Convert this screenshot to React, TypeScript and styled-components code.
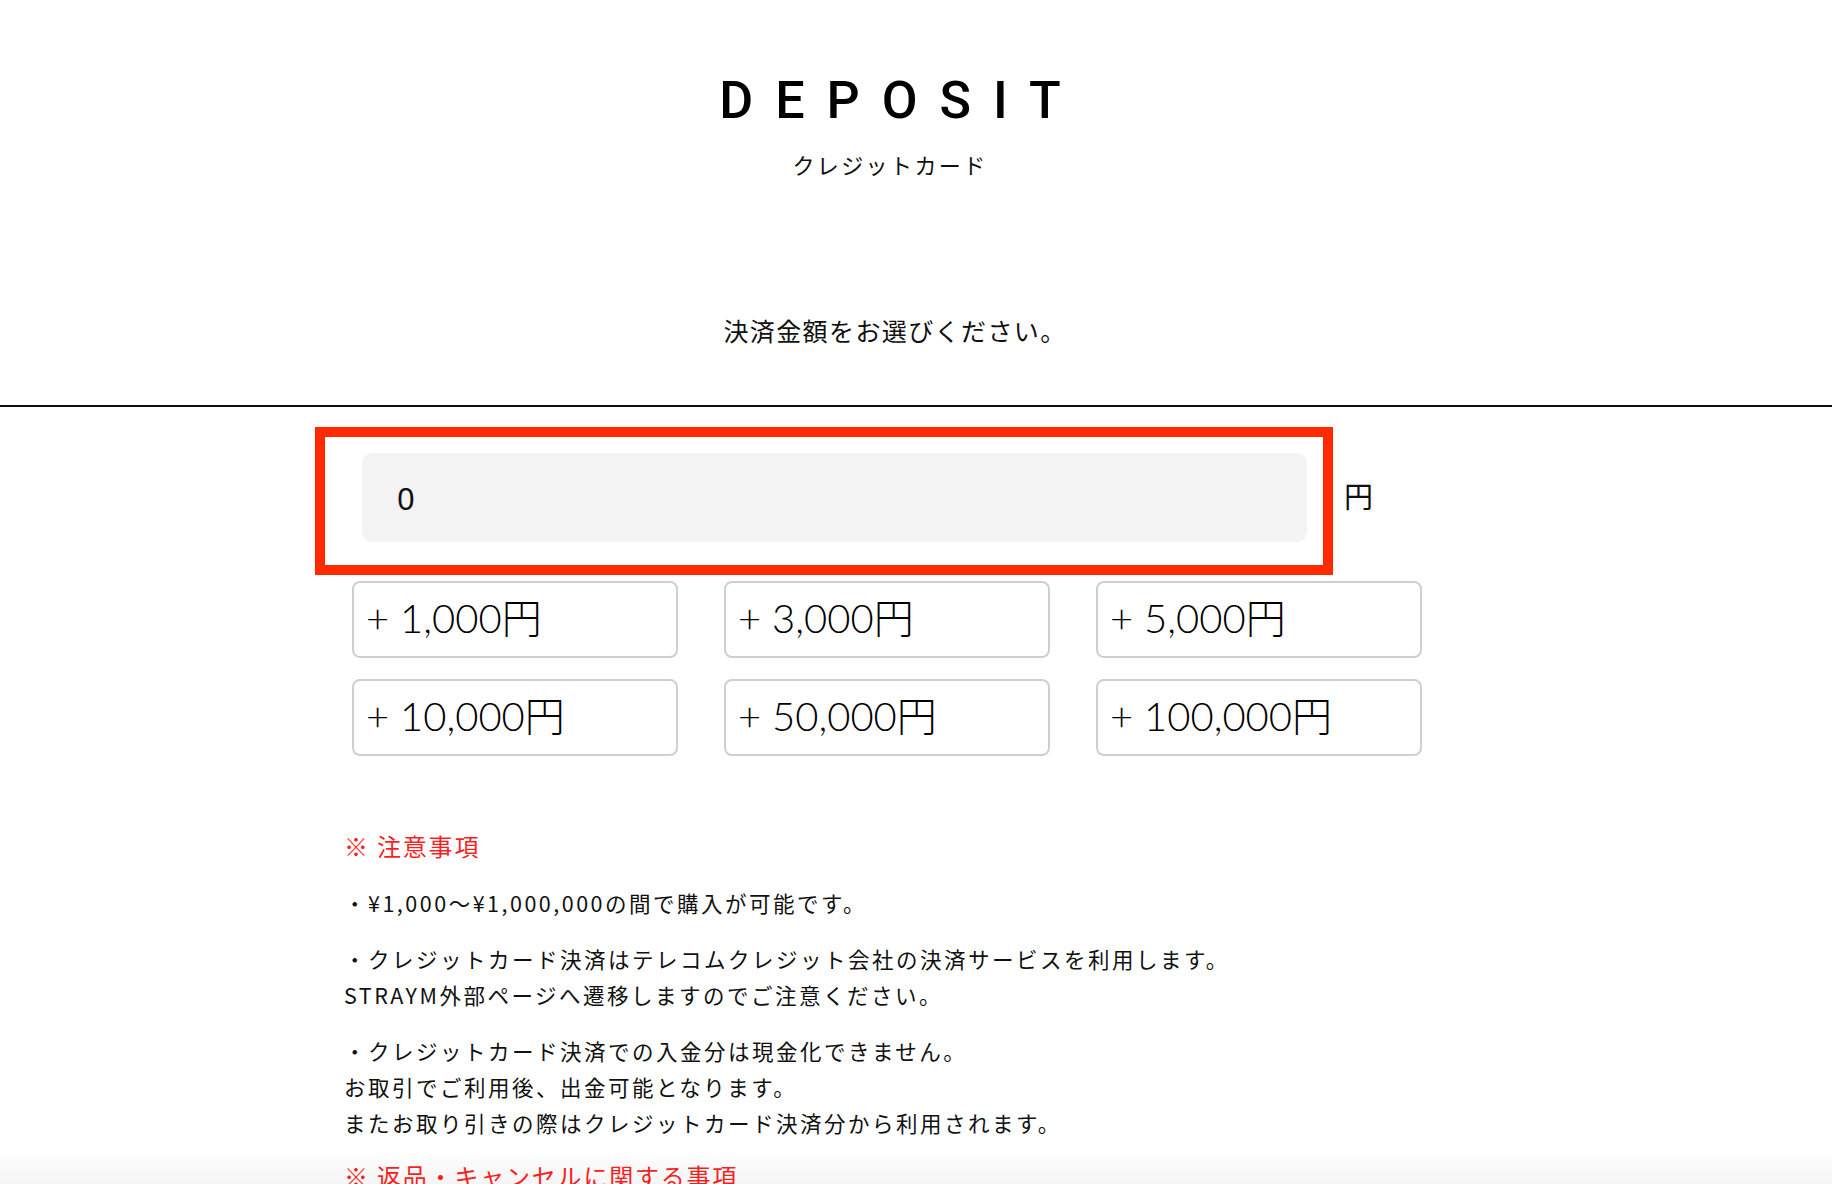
import React, { useState } from "react";
import styled, { createGlobalStyle } from "styled-components";

const presets = [1000, 3000, 5000, 10000, 50000, 100000];

const App: React.FC = () => {
  const [amount, setAmount] = useState(0);

  return (
    <>
      <GlobalStyle />
      <Header>
        <Title>DEPOSIT</Title>
        <Subtitle>クレジットカード</Subtitle>
        <Lead>決済金額をお選びください。</Lead>
      </Header>
      <Divider />
      <Content>
        <FormRow>
          <Highlight>
            <AmountInput
              type="text"
              value={amount}
              onChange={(e) => setAmount(Number(e.target.value.replace(/\D/g, "")) || 0)}
            />
          </Highlight>
          <Unit>円</Unit>
        </FormRow>
        <ButtonGrid>
          {presets.map((value) => (
            <PresetButton key={value} onClick={() => setAmount(amount + value)}>
              + {value.toLocaleString("ja-JP")}円
            </PresetButton>
          ))}
        </ButtonGrid>
        <Notes>
          <NoteTitle>※ 注意事項</NoteTitle>
          <NoteText>・¥1,000〜¥1,000,000の間で購入が可能です。</NoteText>
          <NoteText>
            ・クレジットカード決済はテレコムクレジット会社の決済サービスを利用します。
            <br />
            STRAYM外部ページへ遷移しますのでご注意ください。
          </NoteText>
          <NoteText>
            ・クレジットカード決済での入金分は現金化できません。
            <br />
            お取引でご利用後、出金可能となります。
            <br />
            またお取り引きの際はクレジットカード決済分から利用されます。
          </NoteText>
          <NoteTitle>※ 返品・キャンセルに関する事項</NoteTitle>
        </Notes>
      </Content>
      <BottomFade />
    </>
  );
};

export default App;

// Styled components
const GlobalStyle = createGlobalStyle`
  html, body {
    margin: 0;
    padding: 0;
    background: #fff;
    color: #111;
    font-family: "Noto Sans CJK JP", "Noto Sans", sans-serif;
  }
  body {
    overflow: hidden;
  }
`;

const Header = styled.header`
  display: flex;
  flex-direction: column;
  align-items: center;
  padding: 71px 52px 0 0;
`;

const Title = styled.h1`
  margin: 0 -22px 0 0;
  font-family: Roboto, "Liberation Sans", sans-serif;
  font-weight: 500;
  font-size: 52px;
  line-height: 60px;
  letter-spacing: 22px;
  color: #000;
`;

const Subtitle = styled.p`
  margin: 17px 0 0;
  font-size: 22px;
  line-height: 33px;
  letter-spacing: 2.4px;
  color: #111;
`;

const Lead = styled.p`
  margin: 131px 0 0;
  padding-left: 10px;
  font-size: 25px;
  line-height: 36px;
  letter-spacing: 1.4px;
  color: #111;
`;

const Divider = styled.hr`
  margin: 57px 0 0;
  border: none;
  height: 2px;
  background: #111;
`;

const Content = styled.main`
  width: 1106px;
  margin: 20px 0 0 315px;
  padding-bottom: 80px;
`;

const FormRow = styled.div`
  display: flex;
  align-items: center;
  gap: 11px;
`;

const Highlight = styled.div`
  box-sizing: border-box;
  width: 1018px;
  padding: 16px 16px 23px 37px;
  border: 10px solid #ff2a00;
`;

const AmountInput = styled.input`
  box-sizing: border-box;
  display: block;
  width: 100%;
  height: 89px;
  padding: 0 0 0 35px;
  border: none;
  border-radius: 10px;
  background: #f3f3f3;
  font-family: "Noto Sans", "Noto Sans CJK JP", sans-serif;
  font-size: 31px;
  color: #111;
  outline: none;
`;

const Unit = styled.span`
  margin-top: -11px;
  font-size: 29px;
  line-height: 1;
  color: #111;
`;

const ButtonGrid = styled.div`
  display: grid;
  grid-template-columns: repeat(3, 326px);
  column-gap: 46px;
  row-gap: 21px;
  margin: 6px 0 0 37px;
`;

const PresetButton = styled.button`
  box-sizing: border-box;
  height: 77px;
  padding: 0 0 7px 12px;
  border: 2px solid #cfcfcf;
  border-radius: 8px;
  background: #fff;
  text-align: left;
  font-family: Lato, "Noto Sans CJK JP", sans-serif;
  font-weight: 300;
  font-size: 40px;
  color: #000;
  cursor: pointer;
`;

const Notes = styled.section`
  margin: 72px 0 0 29px;
`;

const NoteTitle = styled.h3`
  margin: 17px 0 0;
  font-weight: 400;
  font-size: 24px;
  line-height: 36px;
  letter-spacing: 1.8px;
  color: #ff1f1f;

  &:first-child {
    margin-top: 0;
  }
`;

const NoteText = styled.p`
  margin: 20px 0 0;
  font-size: 21.5px;
  line-height: 36px;
  letter-spacing: 2.5px;
  color: #111;

  ${NoteTitle}:first-child + & {
    margin-top: 21px;
  }
`;

const BottomFade = styled.div`
  position: fixed;
  left: 0;
  right: 0;
  bottom: 0;
  height: 36px;
  background: linear-gradient(rgba(0, 0, 0, 0), rgba(0, 0, 0, 0.04));
  pointer-events: none;
`;
